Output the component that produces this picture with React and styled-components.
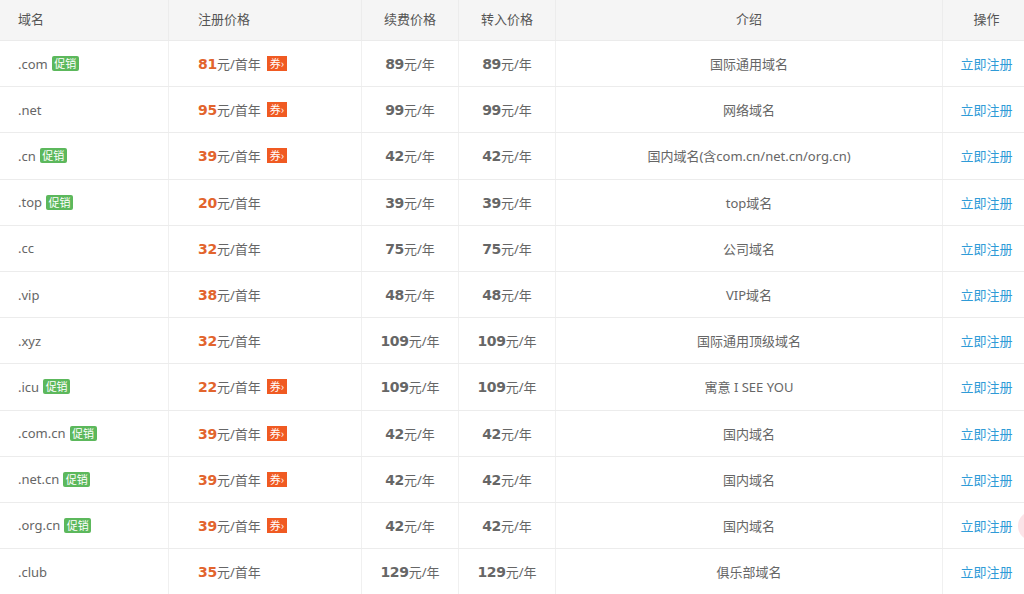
import React from 'react';
import styled, { createGlobalStyle } from 'styled-components';

const GlobalStyle = createGlobalStyle`
  html, body {
    margin: 0;
    padding: 0;
    background: #fff;
    overflow: hidden;
  }
  body {
    font-family: "Noto Sans", "Noto Sans CJK SC", "Liberation Sans", sans-serif;
    font-size: 13px;
    color: #666;
  }
`;

const domains = [
  { name: '.com', promo: true, reg: 81, coupon: true, renew: 89, transfer: 89, intro: '国际通用域名' },
  { name: '.net', promo: false, reg: 95, coupon: true, renew: 99, transfer: 99, intro: '网络域名' },
  { name: '.cn', promo: true, reg: 39, coupon: true, renew: 42, transfer: 42, intro: '国内域名(含com.cn/net.cn/org.cn)' },
  { name: '.top', promo: true, reg: 20, coupon: false, renew: 39, transfer: 39, intro: 'top域名' },
  { name: '.cc', promo: false, reg: 32, coupon: false, renew: 75, transfer: 75, intro: '公司域名' },
  { name: '.vip', promo: false, reg: 38, coupon: false, renew: 48, transfer: 48, intro: 'VIP域名' },
  { name: '.xyz', promo: false, reg: 32, coupon: false, renew: 109, transfer: 109, intro: '国际通用顶级域名' },
  { name: '.icu', promo: true, reg: 22, coupon: true, renew: 109, transfer: 109, intro: '寓意 I SEE YOU' },
  { name: '.com.cn', promo: true, reg: 39, coupon: true, renew: 42, transfer: 42, intro: '国内域名' },
  { name: '.net.cn', promo: true, reg: 39, coupon: true, renew: 42, transfer: 42, intro: '国内域名' },
  { name: '.org.cn', promo: true, reg: 39, coupon: true, renew: 42, transfer: 42, intro: '国内域名' },
  { name: '.club', promo: false, reg: 35, coupon: false, renew: 129, transfer: 129, intro: '俱乐部域名' },
];

const columns = '168px 193px 97px 97px 387px 88px';

const Table = styled.div`
  width: 1030px;
  display: flex;
  flex-direction: column;
`;

const HeadRow = styled.div`
  display: grid;
  grid-template-columns: ${columns};
  height: 41px;
  background: #f5f5f5;
  border-bottom: 1px solid #ebebeb;
  box-sizing: border-box;
  color: #555;
`;

const Row = styled.div`
  display: grid;
  grid-template-columns: ${columns};
  height: 46.2px;
  border-bottom: 1px solid #ececec;
  box-sizing: border-box;
`;

const Cell = styled.div`
  display: flex;
  align-items: center;
  justify-content: ${({ $align }) => ($align === 'left' ? 'flex-start' : 'center')};
  padding-left: ${({ $pad }) => $pad || 0}px;
  border-left: ${({ $first }) => ($first ? 'none' : '1px solid #f0f0f0')};
  white-space: nowrap;
  gap: 4px;
`;

const HeadCell = styled(Cell)`
  padding-bottom: 3px;
  border-left-color: #ececec;
`;

const PromoTag = styled.span`
  display: inline-flex;
  align-items: center;
  height: 15px;
  padding: 0 2.5px;
  border-radius: 2px;
  background: #5cb85c;
  color: #fff;
  font-family: "Noto Sans CJK SC", sans-serif;
  font-size: 11px;
  line-height: 15px;
`;

const Number = styled.b`
  font-family: "DejaVu Sans", Verdana, sans-serif;
  font-weight: bold;
  font-size: 14px;
  color: ${({ $accent }) => ($accent ? '#e2642d' : '#666')};
  letter-spacing: -0.3px;
`;

const Price = styled.span`
  display: inline-flex;
  align-items: baseline;
`;

const Coupon = styled.span`
  display: inline-flex;
  align-items: center;
  height: 15px;
  padding: 0 3px;
  margin-left: 2px;
  background: #f05a22;
  color: #fff;
  font-family: "Noto Sans CJK SC", sans-serif;
  font-size: 11px;
  line-height: 15px;
`;

const Link = styled.a`
  color: #2f9bd7;
  text-decoration: none;
`;

const Floater = styled.div`
  position: fixed;
  right: -20px;
  top: 512px;
  width: 26px;
  height: 28px;
  border-radius: 50%;
  background: #fbe4e8;
`;

export default function App() {
  return (
    <>
      <GlobalStyle />
      <Table>
        <HeadRow>
          <HeadCell $first $align="left" $pad={18}>域名</HeadCell>
          <HeadCell $align="left" $pad={29}>注册价格</HeadCell>
          <HeadCell>续费价格</HeadCell>
          <HeadCell>转入价格</HeadCell>
          <HeadCell>介绍</HeadCell>
          <HeadCell>操作</HeadCell>
        </HeadRow>
        {domains.map((d) => (
          <Row key={d.name}>
            <Cell $first $align="left" $pad={18}>
              {d.name}
              {d.promo && <PromoTag>促销</PromoTag>}
            </Cell>
            <Cell $align="left" $pad={29}>
              <Price>
                <Number $accent>{d.reg}</Number>元/首年
              </Price>
              {d.coupon && <Coupon>券›</Coupon>}
            </Cell>
            <Cell>
              <Price>
                <Number>{d.renew}</Number>元/年
              </Price>
            </Cell>
            <Cell>
              <Price>
                <Number>{d.transfer}</Number>元/年
              </Price>
            </Cell>
            <Cell>{d.intro}</Cell>
            <Cell>
              <Link href="#">立即注册</Link>
            </Cell>
          </Row>
        ))}
      </Table>
      <Floater />
    </>
  );
}
